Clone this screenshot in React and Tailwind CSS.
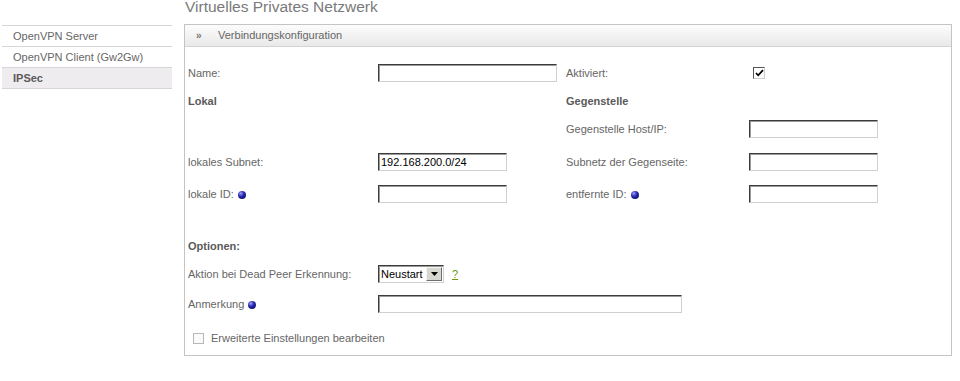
import React from "react";

const font = { fontFamily: '"Liberation Sans", Arial, sans-serif' };

function Input({ w, value }) {
  return (
    <div
      className={`${w} h-[18px] bg-white border border-t-[#3c3c3c] border-l-[#3c3c3c] border-r-[#d0d0d0] border-b-[#d0d0d0] shadow-[inset_1px_1px_0_#9a9a9a] text-[11px] text-black leading-[16px] pl-[2px]`}
    >
      {value}
    </div>
  );
}

function Dot() {
  return (
    <span className="inline-block w-[8px] h-[8px] rounded-full bg-[radial-gradient(circle_at_35%_30%,#9aa0ff_0%,#2a2ab0_40%,#00003a_100%)] ml-[4px] align-[-1px]" />
  );
}

function Label({ children, bold }) {
  return (
    <div className={`text-[11px] ${bold ? "font-bold text-[#5a5a5a]" : "text-[#666]"}`}>{children}</div>
  );
}

export default function App() {
  return (
    <div className="w-[960px] h-[381px] bg-white overflow-hidden flex items-start" style={font}>
      {/* Sidebar */}
      <div className="ml-[2px] mt-[25px] w-[170px] border-t border-[#d6d6d6]">
        <div className="h-[21px] border-b border-[#d6d6d6] pl-[11px] flex items-center text-[11px] text-[#666]">
          OpenVPN Server
        </div>
        <div className="h-[21px] border-b border-[#d6d6d6] pl-[11px] flex items-center text-[11px] text-[#666]">
          OpenVPN Client (Gw2Gw)
        </div>
        <div className="h-[21px] border-b border-[#d6d6d6] pl-[11px] flex items-center text-[11px] text-[#5a5a5a] font-bold bg-[#efecef]">
          IPSec
        </div>
      </div>

      {/* Main */}
      <div className="ml-[12px] w-[768px]">
        <div className="h-[25px] overflow-visible">
          <div className="-mt-[1px] pl-[1px] text-[15.5px] leading-[15.5px] text-[#7a7a7a]">
            Virtuelles Privates Netzwerk
          </div>
        </div>
        <div className="border border-[#c4c4c4] h-[332px]">
          <div className="h-[22px] border-b border-[#d4d4d4] bg-[linear-gradient(#fcfcfc,#e9e9e9)] flex items-center text-[11px] text-[#666]">
            <span className="ml-[11px] w-[22px] text-[10px] font-bold text-[#777]">»</span>
            <span>Verbindungskonfiguration</span>
          </div>

          <div className="pl-[3px] pt-[12px]">
            <div className="grid grid-cols-[190px_188px_183px_1fr]">
              {/* Row 1 */}
              <div className="h-[28px] flex items-center"><Label>Name:</Label></div>
              <div className="h-[28px] flex items-center"><Input w="w-[179px]" /></div>
              <div className="h-[28px] flex items-center"><Label>Aktiviert:</Label></div>
              <div className="h-[28px] flex items-center pl-[4px]">
                <div className="w-[12px] h-[12px] bg-white border border-t-[#555] border-l-[#555] border-r-[#ccc] border-b-[#ccc] flex items-center justify-center">
                  <svg width="9" height="8" viewBox="0 0 9 8">
                    <path d="M1 4 L3.2 6.3 L8 1.2" fill="none" stroke="#000" strokeWidth="1.8" />
                  </svg>
                </div>
              </div>

              {/* Row 2 */}
              <div className="h-[28px] flex items-center"><Label bold>Lokal</Label></div>
              <div className="h-[28px]" />
              <div className="h-[28px] flex items-center"><Label bold>Gegenstelle</Label></div>
              <div className="h-[28px]" />

              {/* Row 3 */}
              <div className="h-[28px]" />
              <div className="h-[28px]" />
              <div className="h-[28px] flex items-center"><Label>Gegenstelle Host/IP:</Label></div>
              <div className="h-[28px] flex items-center"><Input w="w-[129px]" /></div>

              {/* Row 4 */}
              <div className="h-[28px] mt-[5px] flex items-center"><Label>lokales Subnet:</Label></div>
              <div className="h-[28px] mt-[5px] flex items-center"><Input w="w-[129px]" value="192.168.200.0/24" /></div>
              <div className="h-[28px] mt-[5px] flex items-center"><Label>Subnetz der Gegenseite:</Label></div>
              <div className="h-[28px] mt-[5px] flex items-center"><Input w="w-[129px]" /></div>

              {/* Row 5 */}
              <div className="h-[28px] mt-[4px] flex items-center"><Label>lokale ID:<Dot /></Label></div>
              <div className="h-[28px] mt-[4px] flex items-center"><Input w="w-[129px]" /></div>
              <div className="h-[28px] mt-[4px] flex items-center"><Label>entfernte ID:<Dot /></Label></div>
              <div className="h-[28px] mt-[4px] flex items-center"><Input w="w-[129px]" /></div>
            </div>

            <div className="mt-[25px] h-[26px] flex items-center"><Label bold>Optionen:</Label></div>

            <div className="flex h-[28px] items-center mt-[1px]">
              <div className="w-[190px]"><Label>Aktion bei Dead Peer Erkennung:</Label></div>
              <div className="w-[66px] h-[18px] flex items-stretch bg-white border border-t-[#3c3c3c] border-l-[#3c3c3c] border-r-[#d0d0d0] border-b-[#d0d0d0] shadow-[inset_1px_1px_0_#9a9a9a]">
                <div className="flex-1 text-[11px] text-black leading-[16px] pl-[2px]">Neustart</div>
                <div className="w-[16px] my-[1px] mr-[1px] bg-[#d8d6d0] border border-t-[#f4f4f4] border-l-[#f4f4f4] border-r-[#707070] border-b-[#707070] flex items-center justify-center">
                  <svg width="7" height="4" viewBox="0 0 7 4">
                    <path d="M0 0 H7 L3.5 4 Z" fill="#000" />
                  </svg>
                </div>
              </div>
              <span className="ml-[8px] text-[11px] text-[#6a9a10] underline">?</span>
            </div>

            <div className="flex h-[28px] items-center mt-[2px]">
              <div className="w-[190px]"><Label>Anmerkung<Dot /></Label></div>
              <Input w="w-[304px]" />
            </div>

            <div className="flex h-[28px] items-center mt-[6px] pl-[5px]">
              <div className="w-[11px] h-[11px] border border-[#b8b8b8] bg-[#fafafa]" />
              <span className="ml-[7px] text-[11px] text-[#666]">Erweiterte Einstellungen bearbeiten</span>
            </div>
          </div>
        </div>
      </div>
    </div>
  );
}
